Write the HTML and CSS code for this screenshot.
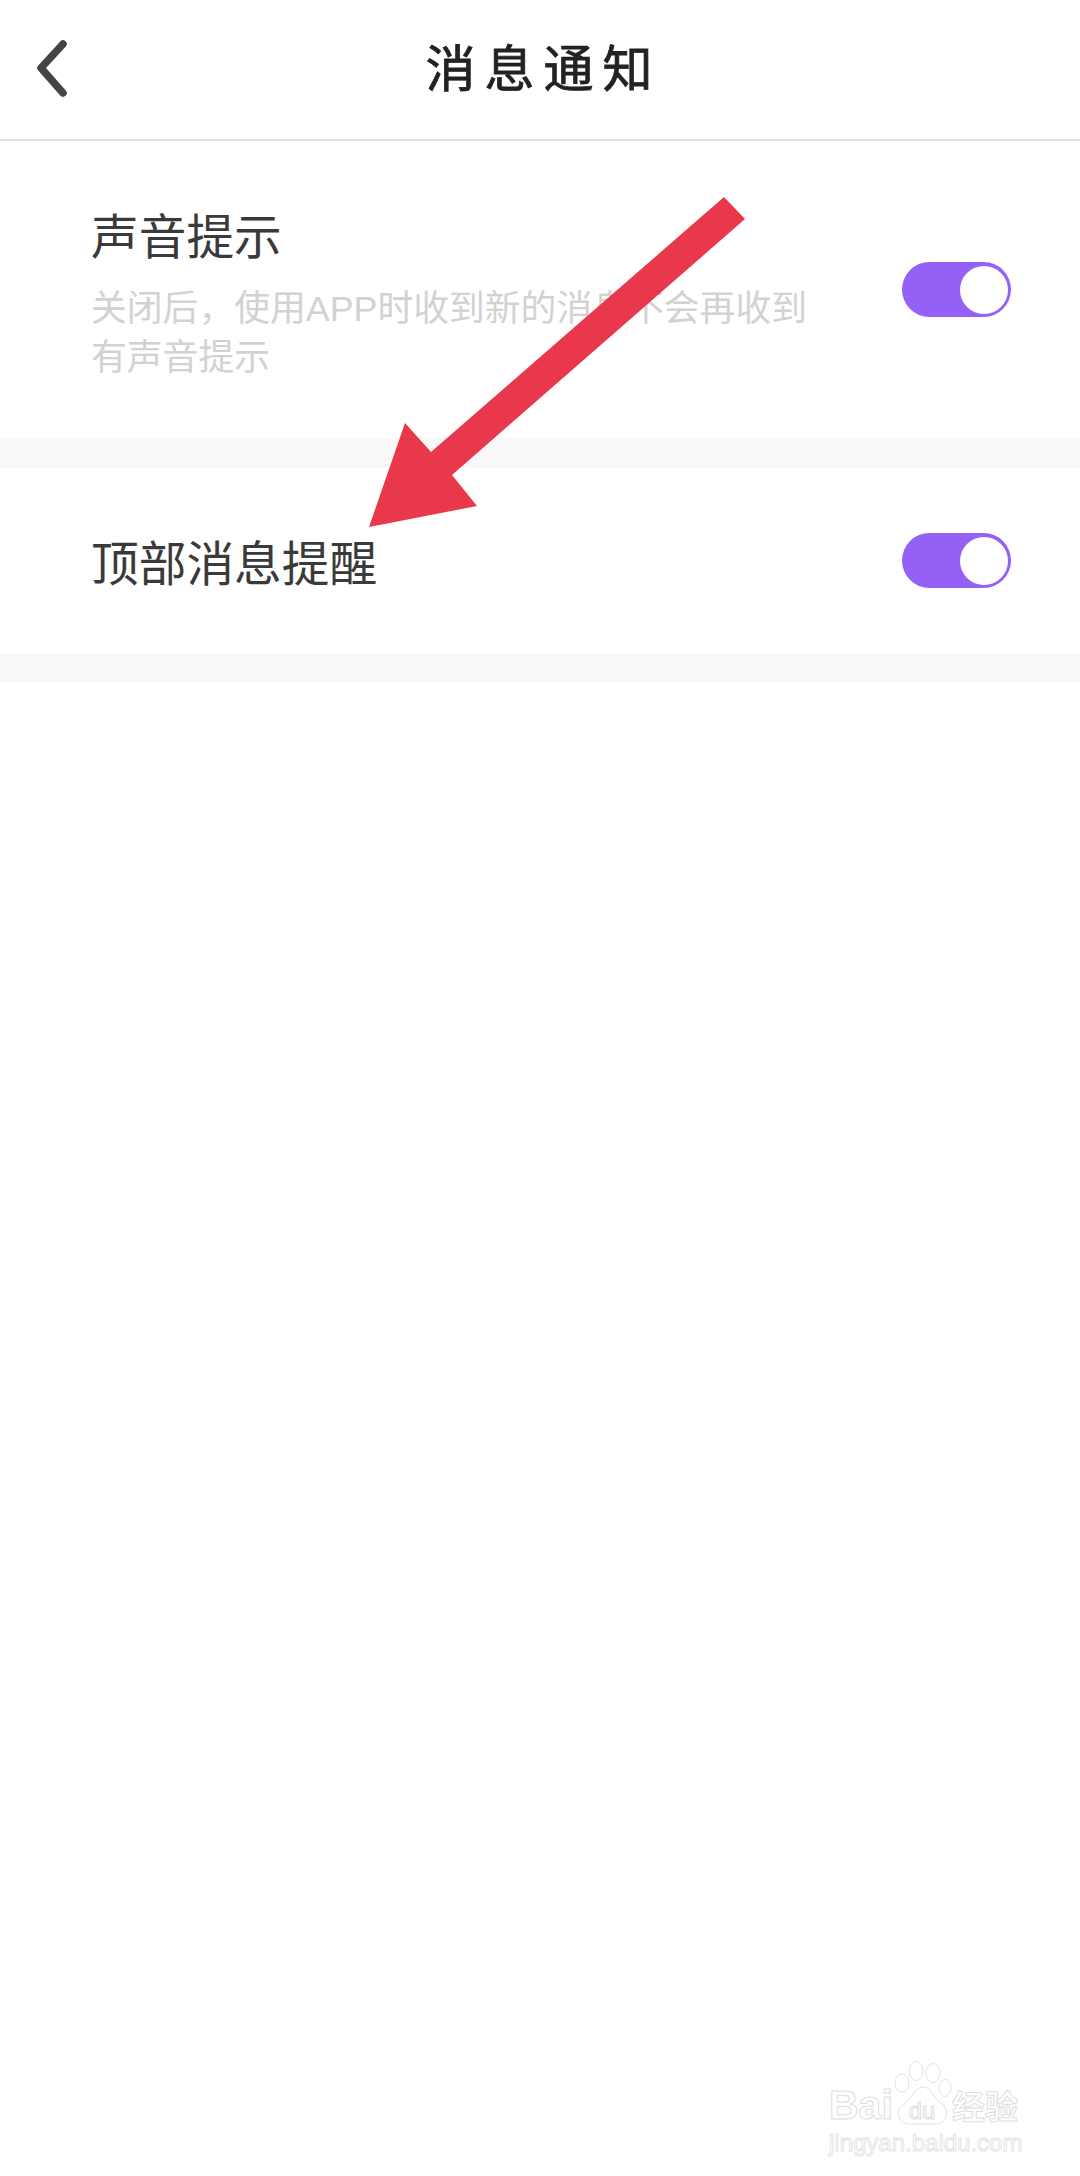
FILE: index.html
```html
<!doctype html>
<html>
<head>
<meta charset="utf-8">
<title>消息通知</title>
<link rel="stylesheet" href="styles.css">
</head>
<body>
	<div class="page">
		<div class="topbar">
			<svg class="back" width="40" height="64" viewBox="0 0 40 64">
				<path d="M29 8 L7 32 L29 57"/>
			</svg>
			<h1 class="title">消息通知</h1>
		</div>

		<div class="row row-first">
			<div class="row-text">
				<div class="row-name">声音提示</div>
				<div class="row-desc">关闭后，使用APP时收到新的消息不会再收到<br>有声音提示</div>
			</div>
			<div class="switch"><span class="knob"></span></div>
		</div>
		<div class="gap"></div>

		<div class="row row-second">
			<div class="row-text">
				<div class="row-name">顶部消息提醒</div>
			</div>
			<div class="switch"><span class="knob"></span></div>
		</div>
		<div class="gap"></div>

		<!-- 标注箭头 -->
		<svg class="arrow" width="1080" height="600" viewBox="0 0 1080 600">
			<polygon points="724,197 745,219 452,475 477,506 369,527 405,423 431,452"/>
		</svg>

		<!-- 水印 -->
		<div class="mark">
			<div class="mark-top">
				<span class="mark-bai">Bai</span>
				<svg class="mark-paw" width="58" height="64" viewBox="0 0 58 64">
					<ellipse cx="8" cy="22" rx="7" ry="9"/>
					<ellipse cx="22" cy="10" rx="7" ry="9.5"/>
					<ellipse cx="39" cy="12" rx="7" ry="9.5"/>
					<ellipse cx="51" cy="27" rx="6" ry="8.5"/>
					<path d="M29 26 C38 26 40 38 47 42 C56 48 54 63 42 63 L15 63 C3 63 1 48 10 43 C18 39 20 26 29 26 Z"/>
					<text x="28" y="58" class="mark-du">du</text>
				</svg>
				<span class="mark-cn">经验</span>
			</div>
			<div class="mark-url">jingyan.baidu.com</div>
		</div>
	</div>
</body>
</html>
```

FILE: styles.css
```css
*{
	padding:0px;
	margin:0px;
	box-sizing:border-box;
}

body{
	background:#fff;
	font-family:"Noto Sans CJK SC","Noto Sans",sans-serif;
}

.page{
	position:relative;
	width:1080px;
	height:2176px;
	overflow:hidden;
}

.topbar{
	position:relative;
	height:141px;
	border-bottom:2px solid #e3e3e3;
	display:flex;
	align-items:center;
	justify-content:center;
	padding:0 0 9px 7px;
}

.back{
	position:absolute;
	left:34px;
	top:36px;
	fill:none;
	stroke:#444;
	stroke-width:7.5;
	stroke-linecap:round;
	stroke-linejoin:round;
}

.title{
	font-size:50px;
	font-weight:400;
	letter-spacing:9px;
	line-height:60px;
	color:#222;
	-webkit-text-stroke:0.8px #222;
}

.row{
	display:flex;
	align-items:center;
	justify-content:space-between;
	padding:0 69px 0 91px;
}

.row-first{
	height:297px;
}

.row-second{
	height:185px;
}

.row-text{
	width:725px;
}

.row-name{
	font-size:47.7px;
	line-height:64px;
	color:#3a3a3a;
}

.row-desc{
	margin:19px 0 -5px;
	font-family:"Liberation Sans","Noto Sans CJK SC",sans-serif;
	font-size:35.8px;
	line-height:49px;
	color:#d2d2d2;
	white-space:nowrap;
}

.switch{
	display:flex;
	justify-content:flex-end;
	align-items:center;
	width:109px;
	height:55px;
	padding-right:3px;
	background:#9460f5;
	border-radius:28px;
}

.knob{
	width:48px;
	height:48px;
	background:#fff;
	border-radius:50%;
}

.gap{
	height:30px;
	background:#f9f9f9;
}

.arrow{
	position:absolute;
	left:0;
	top:0;
	fill:#e9374b;
}

.mark{
	position:absolute;
	left:829px;
	top:2061px;
	width:200px;
	color:#fff;
	font-family:"Liberation Sans",sans-serif;
}

.mark-top{
	display:flex;
	align-items:flex-end;
	height:64px;
}

.mark-bai{
	width:65px;
	font-size:41px;
	line-height:40px;
	font-weight:700;
	-webkit-text-stroke:1px #dedede;
}

.mark-paw{
	fill:#fff;
	stroke:#e2e2e2;
	stroke-width:1;
	flex:none;
}

.mark-du{
	font-size:24px;
	font-family:"Liberation Sans",sans-serif;
	text-anchor:middle;
	fill:#fff;
	stroke:#dedede;
}

.mark-cn{
	font-family:"Noto Sans CJK SC",sans-serif;
	font-size:33px;
	line-height:40px;
	font-weight:700;
	-webkit-text-stroke:1px #dedede;
	white-space:nowrap;
}

.mark-url{
	margin-top:3px;
	font-size:24px;
	line-height:30px;
	white-space:nowrap;
	-webkit-text-stroke:1px #e4e4e4;
}
```
